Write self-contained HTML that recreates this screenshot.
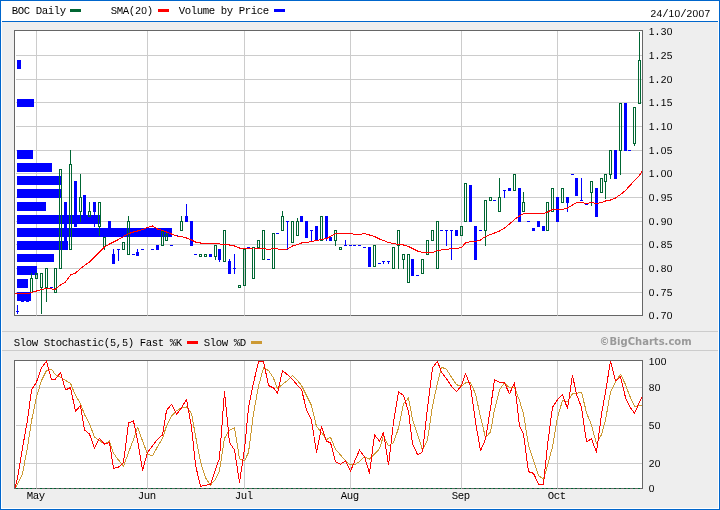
<!DOCTYPE html><html><head><meta charset="utf-8"><title>BOC Daily</title><style>html,body{margin:0;padding:0;background:#fff}svg{display:block;will-change:transform}text{font-family:"Liberation Mono",monospace;font-size:10.7px;fill:#000}.n{font-family:"Liberation Sans",sans-serif;font-size:10.2px;text-rendering:geometricPrecision}.b{font-family:"DejaVu Sans","Liberation Sans",sans-serif;font-weight:bold;font-size:10px;fill:#999}</style></head><body>
<svg width="720" height="510" viewBox="0 0 720 510" shape-rendering="crispEdges">
<rect x="0" y="0" width="720" height="510" fill="#0066cc"/>
<rect x="1" y="1" width="718" height="508" fill="#fff"/>
<rect x="2" y="22" width="716" height="486" fill="#eeeeee"/>
<rect x="2" y="21" width="716" height="1" fill="#0066cc"/>
<rect x="2" y="331" width="716" height="1" fill="#cccccc"/>
<rect x="2" y="350" width="716" height="1" fill="#cccccc"/>
<rect x="14" y="30" width="629" height="286" fill="#666666"/>
<rect x="15" y="31" width="627" height="284" fill="#fff"/>
<rect x="16" y="55" width="626" height="1" fill="#cccccc"/>
<rect x="16" y="79" width="626" height="1" fill="#cccccc"/>
<rect x="16" y="102" width="626" height="1" fill="#cccccc"/>
<rect x="16" y="126" width="626" height="1" fill="#cccccc"/>
<rect x="16" y="150" width="626" height="1" fill="#cccccc"/>
<rect x="16" y="173" width="626" height="1" fill="#cccccc"/>
<rect x="16" y="197" width="626" height="1" fill="#cccccc"/>
<rect x="16" y="221" width="626" height="1" fill="#cccccc"/>
<rect x="16" y="244" width="626" height="1" fill="#cccccc"/>
<rect x="16" y="268" width="626" height="1" fill="#cccccc"/>
<rect x="16" y="292" width="626" height="1" fill="#cccccc"/>
<rect x="36" y="31" width="1" height="284" fill="#cccccc"/>
<rect x="147" y="31" width="1" height="284" fill="#cccccc"/>
<rect x="244" y="31" width="1" height="284" fill="#cccccc"/>
<rect x="350" y="31" width="1" height="284" fill="#cccccc"/>
<rect x="461" y="31" width="1" height="284" fill="#cccccc"/>
<rect x="557" y="31" width="1" height="284" fill="#cccccc"/>
<rect x="14" y="360" width="629" height="129" fill="#666666"/>
<rect x="15" y="361" width="627" height="127" fill="#fff"/>
<rect x="16" y="387" width="626" height="1" fill="#cccccc"/>
<rect x="16" y="425" width="626" height="1" fill="#cccccc"/>
<rect x="16" y="463" width="626" height="1" fill="#cccccc"/>
<rect x="36" y="361" width="1" height="127" fill="#cccccc"/>
<rect x="147" y="361" width="1" height="127" fill="#cccccc"/>
<rect x="244" y="361" width="1" height="127" fill="#cccccc"/>
<rect x="350" y="361" width="1" height="127" fill="#cccccc"/>
<rect x="461" y="361" width="1" height="127" fill="#cccccc"/>
<rect x="557" y="361" width="1" height="127" fill="#cccccc"/>
<text x="11.80 17.80 23.80 29.80 35.80 41.80 47.80 53.80 59.80" y="14" xml:space="preserve">BOC Daily</text>
<rect x="70" y="9" width="11" height="3" fill="#006633"/>
<text x="110.80 116.80 122.80 128.80 135.20 141.20 146.80" y="14" xml:space="preserve">SMA(<tspan class="n">20</tspan>)</text>
<rect x="158" y="9" width="11" height="3" fill="#ff0000"/>
<text x="178.80 184.80 190.80 196.80 202.80 208.80 214.80 220.80 226.80 232.80 238.80 244.80 250.80 256.80 262.80" y="14" xml:space="preserve">Volume by Price</text>
<rect x="274" y="9" width="11" height="3" fill="#0000ff"/>
<text x="650.60 656.60 662.20 668.60 674.60 680.20 686.60 692.60 698.60 704.60" y="17" xml:space="preserve"><tspan class="n">24</tspan>/<tspan class="n">10</tspan>/<tspan class="n">2007</tspan></text>
<text x="13.80 19.80 25.80 31.80 37.80 43.80 49.80 55.80 61.80 67.80 73.80 79.80 85.80 91.80 97.80 103.80 110.20 115.80 122.20 127.80" y="346" xml:space="preserve">Slow Stochastic(<tspan class="n">5</tspan>,<tspan class="n">5</tspan>)</text>
<text x="139.80 145.80 151.80 157.80 163.80 169.80 175.80" y="346" xml:space="preserve">Fast %K</text>
<rect x="187" y="341" width="11" height="3" fill="#ff0000"/>
<text x="203.80 209.80 215.80 221.80 227.80 233.80 239.80" y="346" xml:space="preserve">Slow %D</text>
<rect x="251" y="341" width="11" height="3" fill="#cc9933"/>
<text x="599.5" y="345" class="b">©BigCharts.com</text>
<text x="648.70 654.30 660.70 666.70" y="35" xml:space="preserve"><tspan class="n">1</tspan>.<tspan class="n">30</tspan></text>
<text x="648.70 654.30 660.70 666.70" y="59" xml:space="preserve"><tspan class="n">1</tspan>.<tspan class="n">25</tspan></text>
<text x="648.70 654.30 660.70 666.70" y="83" xml:space="preserve"><tspan class="n">1</tspan>.<tspan class="n">20</tspan></text>
<text x="648.70 654.30 660.70 666.70" y="106" xml:space="preserve"><tspan class="n">1</tspan>.<tspan class="n">15</tspan></text>
<text x="648.70 654.30 660.70 666.70" y="130" xml:space="preserve"><tspan class="n">1</tspan>.<tspan class="n">10</tspan></text>
<text x="648.70 654.30 660.70 666.70" y="154" xml:space="preserve"><tspan class="n">1</tspan>.<tspan class="n">05</tspan></text>
<text x="648.70 654.30 660.70 666.70" y="177" xml:space="preserve"><tspan class="n">1</tspan>.<tspan class="n">00</tspan></text>
<text x="648.70 654.30 660.70 666.70" y="201" xml:space="preserve"><tspan class="n">0</tspan>.<tspan class="n">95</tspan></text>
<text x="648.70 654.30 660.70 666.70" y="225" xml:space="preserve"><tspan class="n">0</tspan>.<tspan class="n">90</tspan></text>
<text x="648.70 654.30 660.70 666.70" y="248" xml:space="preserve"><tspan class="n">0</tspan>.<tspan class="n">85</tspan></text>
<text x="648.70 654.30 660.70 666.70" y="272" xml:space="preserve"><tspan class="n">0</tspan>.<tspan class="n">80</tspan></text>
<text x="648.70 654.30 660.70 666.70" y="296" xml:space="preserve"><tspan class="n">0</tspan>.<tspan class="n">75</tspan></text>
<text x="648.70 654.30 660.70 666.70" y="319" xml:space="preserve"><tspan class="n">0</tspan>.<tspan class="n">70</tspan></text>
<text x="648.70 654.70 660.70" y="365" xml:space="preserve"><tspan class="n">100</tspan></text>
<text x="648.70 654.70" y="391" xml:space="preserve"><tspan class="n">80</tspan></text>
<text x="648.70 654.70" y="429" xml:space="preserve"><tspan class="n">50</tspan></text>
<text x="648.70 654.70" y="467" xml:space="preserve"><tspan class="n">20</tspan></text>
<text x="648.70" y="492" xml:space="preserve"><tspan class="n">0</tspan></text>
<text x="26.80 32.80 38.80" y="499" xml:space="preserve">May</text>
<text x="137.80 143.80 149.80" y="499" xml:space="preserve">Jun</text>
<text x="234.80 240.80 246.80" y="499" xml:space="preserve">Jul</text>
<text x="340.80 346.80 352.80" y="499" xml:space="preserve">Aug</text>
<text x="451.80 457.80 463.80" y="499" xml:space="preserve">Sep</text>
<text x="547.80 553.80 559.80" y="499" xml:space="preserve">Oct</text>
<rect x="17" y="60" width="4" height="9" fill="#0000ff"/>
<rect x="17" y="99" width="17" height="8" fill="#0000ff"/>
<rect x="17" y="150" width="16" height="9" fill="#0000ff"/>
<rect x="17" y="163" width="35" height="9" fill="#0000ff"/>
<rect x="17" y="176" width="44" height="9" fill="#0000ff"/>
<rect x="17" y="189" width="45" height="9" fill="#0000ff"/>
<rect x="17" y="202" width="29" height="9" fill="#0000ff"/>
<rect x="17" y="215" width="84" height="9" fill="#0000ff"/>
<rect x="17" y="228" width="155" height="9" fill="#0000ff"/>
<rect x="17" y="241" width="51" height="9" fill="#0000ff"/>
<rect x="17" y="254" width="37" height="8" fill="#0000ff"/>
<rect x="17" y="266" width="20" height="9" fill="#0000ff"/>
<rect x="17" y="279" width="11" height="9" fill="#0000ff"/>
<rect x="17" y="292" width="14" height="9" fill="#0000ff"/>
<rect x="17" y="305" width="1" height="6" fill="#0000ff"/>
<rect x="17" y="312" width="1" height="2" fill="#0000ff"/>
<rect x="16" y="311" width="3" height="1" fill="#0000ff"/>
<rect x="21" y="292" width="3" height="10" fill="#0000ff"/>
<rect x="26" y="292" width="3" height="10" fill="#0000ff"/>
<rect x="31" y="273" width="1" height="5" fill="#006633"/>
<rect x="30" y="278" width="1" height="15" fill="#006633"/>
<rect x="32" y="278" width="1" height="15" fill="#006633"/>
<rect x="31" y="278" width="1" height="1" fill="#006633"/>
<rect x="31" y="292" width="1" height="1" fill="#006633"/>
<rect x="35" y="273" width="1" height="6" fill="#006633"/>
<rect x="37" y="273" width="1" height="6" fill="#006633"/>
<rect x="36" y="273" width="1" height="1" fill="#006633"/>
<rect x="36" y="278" width="1" height="1" fill="#006633"/>
<rect x="41" y="288" width="1" height="26" fill="#006633"/>
<rect x="40" y="273" width="1" height="15" fill="#006633"/>
<rect x="42" y="273" width="1" height="15" fill="#006633"/>
<rect x="41" y="273" width="1" height="1" fill="#006633"/>
<rect x="41" y="287" width="1" height="1" fill="#006633"/>
<rect x="46" y="288" width="1" height="14" fill="#006633"/>
<rect x="45" y="268" width="1" height="20" fill="#006633"/>
<rect x="47" y="268" width="1" height="20" fill="#006633"/>
<rect x="46" y="268" width="1" height="1" fill="#006633"/>
<rect x="46" y="287" width="1" height="1" fill="#006633"/>
<rect x="50" y="287" width="3" height="1" fill="#0000ff"/>
<rect x="54" y="268" width="1" height="25" fill="#006633"/>
<rect x="56" y="268" width="1" height="25" fill="#006633"/>
<rect x="55" y="268" width="1" height="1" fill="#006633"/>
<rect x="55" y="292" width="1" height="1" fill="#006633"/>
<rect x="59" y="169" width="1" height="100" fill="#006633"/>
<rect x="61" y="169" width="1" height="100" fill="#006633"/>
<rect x="60" y="169" width="1" height="1" fill="#006633"/>
<rect x="60" y="268" width="1" height="1" fill="#006633"/>
<rect x="64" y="202" width="3" height="39" fill="#0000ff"/>
<rect x="70" y="150" width="1" height="14" fill="#006633"/>
<rect x="69" y="164" width="1" height="86" fill="#006633"/>
<rect x="71" y="164" width="1" height="86" fill="#006633"/>
<rect x="70" y="164" width="1" height="1" fill="#006633"/>
<rect x="70" y="249" width="1" height="1" fill="#006633"/>
<rect x="74" y="181" width="3" height="46" fill="#0000ff"/>
<rect x="80" y="174" width="1" height="23" fill="#006633"/>
<rect x="80" y="212" width="1" height="10" fill="#006633"/>
<rect x="79" y="197" width="1" height="15" fill="#006633"/>
<rect x="81" y="197" width="1" height="15" fill="#006633"/>
<rect x="80" y="197" width="1" height="1" fill="#006633"/>
<rect x="80" y="211" width="1" height="1" fill="#006633"/>
<rect x="83" y="195" width="3" height="27" fill="#0000ff"/>
<rect x="89" y="202" width="1" height="9" fill="#006633"/>
<rect x="88" y="211" width="1" height="6" fill="#006633"/>
<rect x="90" y="211" width="1" height="6" fill="#006633"/>
<rect x="89" y="211" width="1" height="1" fill="#006633"/>
<rect x="89" y="216" width="1" height="1" fill="#006633"/>
<rect x="94" y="212" width="1" height="15" fill="#0000ff"/>
<rect x="93" y="202" width="3" height="10" fill="#0000ff"/>
<rect x="99" y="227" width="1" height="9" fill="#006633"/>
<rect x="98" y="202" width="1" height="25" fill="#006633"/>
<rect x="100" y="202" width="1" height="25" fill="#006633"/>
<rect x="99" y="202" width="1" height="1" fill="#006633"/>
<rect x="99" y="226" width="1" height="1" fill="#006633"/>
<rect x="104" y="247" width="1" height="3" fill="#006633"/>
<rect x="103" y="237" width="1" height="10" fill="#006633"/>
<rect x="105" y="237" width="1" height="10" fill="#006633"/>
<rect x="104" y="237" width="1" height="1" fill="#006633"/>
<rect x="104" y="246" width="1" height="1" fill="#006633"/>
<rect x="108" y="221" width="3" height="10" fill="#0000ff"/>
<rect x="113" y="249" width="1" height="5" fill="#0000ff"/>
<rect x="112" y="254" width="3" height="10" fill="#0000ff"/>
<rect x="118" y="250" width="1" height="11" fill="#0000ff"/>
<rect x="117" y="249" width="3" height="1" fill="#0000ff"/>
<rect x="122" y="242" width="1" height="8" fill="#006633"/>
<rect x="124" y="242" width="1" height="8" fill="#006633"/>
<rect x="123" y="242" width="1" height="1" fill="#006633"/>
<rect x="123" y="249" width="1" height="1" fill="#006633"/>
<rect x="128" y="216" width="1" height="5" fill="#006633"/>
<rect x="127" y="221" width="1" height="34" fill="#006633"/>
<rect x="129" y="221" width="1" height="34" fill="#006633"/>
<rect x="128" y="221" width="1" height="1" fill="#006633"/>
<rect x="128" y="254" width="1" height="1" fill="#006633"/>
<rect x="132" y="254" width="3" height="1" fill="#0000ff"/>
<rect x="137" y="249" width="1" height="3" fill="#0000ff"/>
<rect x="136" y="252" width="3" height="4" fill="#0000ff"/>
<rect x="141" y="249" width="3" height="1" fill="#0000ff"/>
<rect x="151" y="249" width="3" height="1" fill="#0000ff"/>
<rect x="156" y="245" width="3" height="5" fill="#0000ff"/>
<rect x="161" y="231" width="1" height="15" fill="#006633"/>
<rect x="163" y="231" width="1" height="15" fill="#006633"/>
<rect x="162" y="231" width="1" height="1" fill="#006633"/>
<rect x="162" y="245" width="1" height="1" fill="#006633"/>
<rect x="166" y="231" width="1" height="3" fill="#006633"/>
<rect x="165" y="234" width="1" height="7" fill="#006633"/>
<rect x="167" y="234" width="1" height="7" fill="#006633"/>
<rect x="166" y="234" width="1" height="1" fill="#006633"/>
<rect x="166" y="240" width="1" height="1" fill="#006633"/>
<rect x="170" y="245" width="3" height="1" fill="#0000ff"/>
<rect x="175" y="235" width="3" height="1" fill="#0000ff"/>
<rect x="181" y="216" width="1" height="5" fill="#006633"/>
<rect x="180" y="221" width="1" height="10" fill="#006633"/>
<rect x="182" y="221" width="1" height="10" fill="#006633"/>
<rect x="181" y="221" width="1" height="1" fill="#006633"/>
<rect x="181" y="230" width="1" height="1" fill="#006633"/>
<rect x="186" y="204" width="1" height="12" fill="#0000ff"/>
<rect x="185" y="216" width="3" height="6" fill="#0000ff"/>
<rect x="190" y="221" width="3" height="25" fill="#0000ff"/>
<rect x="194" y="254" width="3" height="1" fill="#0000ff"/>
<rect x="199" y="254" width="1" height="3" fill="#006633"/>
<rect x="201" y="254" width="1" height="3" fill="#006633"/>
<rect x="200" y="254" width="1" height="1" fill="#006633"/>
<rect x="200" y="256" width="1" height="1" fill="#006633"/>
<rect x="204" y="254" width="1" height="3" fill="#006633"/>
<rect x="206" y="254" width="1" height="3" fill="#006633"/>
<rect x="205" y="254" width="1" height="1" fill="#006633"/>
<rect x="205" y="256" width="1" height="1" fill="#006633"/>
<rect x="209" y="254" width="3" height="3" fill="#0000ff"/>
<rect x="215" y="257" width="1" height="3" fill="#006633"/>
<rect x="214" y="245" width="1" height="12" fill="#006633"/>
<rect x="216" y="245" width="1" height="12" fill="#006633"/>
<rect x="215" y="245" width="1" height="1" fill="#006633"/>
<rect x="215" y="256" width="1" height="1" fill="#006633"/>
<rect x="219" y="260" width="1" height="2" fill="#0000ff"/>
<rect x="218" y="249" width="3" height="11" fill="#0000ff"/>
<rect x="223" y="230" width="1" height="32" fill="#006633"/>
<rect x="225" y="230" width="1" height="32" fill="#006633"/>
<rect x="224" y="230" width="1" height="1" fill="#006633"/>
<rect x="224" y="261" width="1" height="1" fill="#006633"/>
<rect x="229" y="259" width="1" height="2" fill="#0000ff"/>
<rect x="228" y="261" width="3" height="13" fill="#0000ff"/>
<rect x="234" y="254" width="1" height="14" fill="#0000ff"/>
<rect x="234" y="269" width="1" height="5" fill="#0000ff"/>
<rect x="233" y="268" width="3" height="1" fill="#0000ff"/>
<rect x="238" y="285" width="1" height="3" fill="#006633"/>
<rect x="240" y="285" width="1" height="3" fill="#006633"/>
<rect x="239" y="285" width="1" height="1" fill="#006633"/>
<rect x="239" y="287" width="1" height="1" fill="#006633"/>
<rect x="243" y="249" width="1" height="37" fill="#006633"/>
<rect x="245" y="249" width="1" height="37" fill="#006633"/>
<rect x="244" y="249" width="1" height="1" fill="#006633"/>
<rect x="244" y="285" width="1" height="1" fill="#006633"/>
<rect x="247" y="247" width="3" height="1" fill="#0000ff"/>
<rect x="252" y="247" width="1" height="32" fill="#006633"/>
<rect x="254" y="247" width="1" height="32" fill="#006633"/>
<rect x="253" y="247" width="1" height="1" fill="#006633"/>
<rect x="253" y="278" width="1" height="1" fill="#006633"/>
<rect x="257" y="240" width="1" height="8" fill="#006633"/>
<rect x="259" y="240" width="1" height="8" fill="#006633"/>
<rect x="258" y="240" width="1" height="1" fill="#006633"/>
<rect x="258" y="247" width="1" height="1" fill="#006633"/>
<rect x="262" y="230" width="1" height="30" fill="#006633"/>
<rect x="264" y="230" width="1" height="30" fill="#006633"/>
<rect x="263" y="230" width="1" height="1" fill="#006633"/>
<rect x="263" y="259" width="1" height="1" fill="#006633"/>
<rect x="267" y="259" width="3" height="1" fill="#0000ff"/>
<rect x="272" y="233" width="1" height="36" fill="#006633"/>
<rect x="274" y="233" width="1" height="36" fill="#006633"/>
<rect x="273" y="233" width="1" height="1" fill="#006633"/>
<rect x="273" y="268" width="1" height="1" fill="#006633"/>
<rect x="276" y="233" width="3" height="1" fill="#0000ff"/>
<rect x="282" y="211" width="1" height="5" fill="#006633"/>
<rect x="281" y="216" width="1" height="15" fill="#006633"/>
<rect x="283" y="216" width="1" height="15" fill="#006633"/>
<rect x="282" y="216" width="1" height="1" fill="#006633"/>
<rect x="282" y="230" width="1" height="1" fill="#006633"/>
<rect x="287" y="222" width="1" height="28" fill="#0000ff"/>
<rect x="286" y="221" width="3" height="1" fill="#0000ff"/>
<rect x="291" y="221" width="1" height="22" fill="#006633"/>
<rect x="293" y="221" width="1" height="22" fill="#006633"/>
<rect x="292" y="221" width="1" height="1" fill="#006633"/>
<rect x="292" y="242" width="1" height="1" fill="#006633"/>
<rect x="297" y="218" width="1" height="3" fill="#006633"/>
<rect x="296" y="221" width="1" height="15" fill="#006633"/>
<rect x="298" y="221" width="1" height="15" fill="#006633"/>
<rect x="297" y="221" width="1" height="1" fill="#006633"/>
<rect x="297" y="235" width="1" height="1" fill="#006633"/>
<rect x="300" y="216" width="3" height="6" fill="#0000ff"/>
<rect x="305" y="221" width="3" height="17" fill="#0000ff"/>
<rect x="311" y="231" width="1" height="10" fill="#0000ff"/>
<rect x="310" y="230" width="3" height="1" fill="#0000ff"/>
<rect x="315" y="226" width="3" height="15" fill="#0000ff"/>
<rect x="320" y="216" width="1" height="25" fill="#006633"/>
<rect x="322" y="216" width="1" height="25" fill="#006633"/>
<rect x="321" y="216" width="1" height="1" fill="#006633"/>
<rect x="321" y="240" width="1" height="1" fill="#006633"/>
<rect x="326" y="239" width="1" height="2" fill="#0000ff"/>
<rect x="325" y="216" width="3" height="23" fill="#0000ff"/>
<rect x="329" y="237" width="3" height="4" fill="#0000ff"/>
<rect x="335" y="241" width="1" height="5" fill="#006633"/>
<rect x="334" y="230" width="1" height="11" fill="#006633"/>
<rect x="336" y="230" width="1" height="11" fill="#006633"/>
<rect x="335" y="230" width="1" height="1" fill="#006633"/>
<rect x="335" y="240" width="1" height="1" fill="#006633"/>
<rect x="339" y="247" width="1" height="3" fill="#006633"/>
<rect x="341" y="247" width="1" height="3" fill="#006633"/>
<rect x="340" y="247" width="1" height="1" fill="#006633"/>
<rect x="340" y="249" width="1" height="1" fill="#006633"/>
<rect x="345" y="240" width="1" height="5" fill="#0000ff"/>
<rect x="344" y="245" width="3" height="1" fill="#0000ff"/>
<rect x="349" y="245" width="3" height="1" fill="#0000ff"/>
<rect x="353" y="245" width="3" height="1" fill="#0000ff"/>
<rect x="358" y="245" width="3" height="1" fill="#0000ff"/>
<rect x="363" y="247" width="3" height="1" fill="#0000ff"/>
<rect x="368" y="247" width="3" height="20" fill="#0000ff"/>
<rect x="373" y="245" width="1" height="22" fill="#006633"/>
<rect x="375" y="245" width="1" height="22" fill="#006633"/>
<rect x="374" y="245" width="1" height="1" fill="#006633"/>
<rect x="374" y="266" width="1" height="1" fill="#006633"/>
<rect x="378" y="263" width="3" height="1" fill="#0000ff"/>
<rect x="383" y="262" width="1" height="2" fill="#0000ff"/>
<rect x="382" y="261" width="3" height="1" fill="#0000ff"/>
<rect x="388" y="262" width="1" height="2" fill="#0000ff"/>
<rect x="387" y="261" width="3" height="1" fill="#0000ff"/>
<rect x="392" y="247" width="1" height="22" fill="#006633"/>
<rect x="394" y="247" width="1" height="22" fill="#006633"/>
<rect x="393" y="247" width="1" height="1" fill="#006633"/>
<rect x="393" y="268" width="1" height="1" fill="#006633"/>
<rect x="398" y="246" width="1" height="23" fill="#006633"/>
<rect x="397" y="230" width="1" height="16" fill="#006633"/>
<rect x="399" y="230" width="1" height="16" fill="#006633"/>
<rect x="398" y="230" width="1" height="1" fill="#006633"/>
<rect x="398" y="245" width="1" height="1" fill="#006633"/>
<rect x="403" y="260" width="1" height="9" fill="#006633"/>
<rect x="402" y="254" width="1" height="6" fill="#006633"/>
<rect x="404" y="254" width="1" height="6" fill="#006633"/>
<rect x="403" y="254" width="1" height="1" fill="#006633"/>
<rect x="403" y="259" width="1" height="1" fill="#006633"/>
<rect x="407" y="254" width="1" height="29" fill="#006633"/>
<rect x="409" y="254" width="1" height="29" fill="#006633"/>
<rect x="408" y="254" width="1" height="1" fill="#006633"/>
<rect x="408" y="282" width="1" height="1" fill="#006633"/>
<rect x="411" y="259" width="3" height="17" fill="#0000ff"/>
<rect x="416" y="275" width="3" height="1" fill="#0000ff"/>
<rect x="421" y="259" width="1" height="15" fill="#006633"/>
<rect x="423" y="259" width="1" height="15" fill="#006633"/>
<rect x="422" y="259" width="1" height="1" fill="#006633"/>
<rect x="422" y="273" width="1" height="1" fill="#006633"/>
<rect x="426" y="240" width="1" height="15" fill="#006633"/>
<rect x="428" y="240" width="1" height="15" fill="#006633"/>
<rect x="427" y="240" width="1" height="1" fill="#006633"/>
<rect x="427" y="254" width="1" height="1" fill="#006633"/>
<rect x="431" y="230" width="1" height="11" fill="#006633"/>
<rect x="433" y="230" width="1" height="11" fill="#006633"/>
<rect x="432" y="230" width="1" height="1" fill="#006633"/>
<rect x="432" y="240" width="1" height="1" fill="#006633"/>
<rect x="436" y="221" width="1" height="48" fill="#006633"/>
<rect x="438" y="221" width="1" height="48" fill="#006633"/>
<rect x="437" y="221" width="1" height="1" fill="#006633"/>
<rect x="437" y="268" width="1" height="1" fill="#006633"/>
<rect x="440" y="230" width="3" height="1" fill="#0000ff"/>
<rect x="446" y="231" width="1" height="15" fill="#0000ff"/>
<rect x="445" y="230" width="3" height="1" fill="#0000ff"/>
<rect x="451" y="231" width="1" height="29" fill="#0000ff"/>
<rect x="450" y="230" width="3" height="1" fill="#0000ff"/>
<rect x="455" y="230" width="3" height="6" fill="#0000ff"/>
<rect x="460" y="226" width="1" height="10" fill="#006633"/>
<rect x="462" y="226" width="1" height="10" fill="#006633"/>
<rect x="461" y="226" width="1" height="1" fill="#006633"/>
<rect x="461" y="235" width="1" height="1" fill="#006633"/>
<rect x="464" y="183" width="1" height="39" fill="#006633"/>
<rect x="466" y="183" width="1" height="39" fill="#006633"/>
<rect x="465" y="183" width="1" height="1" fill="#006633"/>
<rect x="465" y="221" width="1" height="1" fill="#006633"/>
<rect x="469" y="185" width="3" height="37" fill="#0000ff"/>
<rect x="474" y="226" width="3" height="34" fill="#0000ff"/>
<rect x="479" y="230" width="3" height="1" fill="#0000ff"/>
<rect x="485" y="231" width="1" height="15" fill="#006633"/>
<rect x="484" y="200" width="1" height="31" fill="#006633"/>
<rect x="486" y="200" width="1" height="31" fill="#006633"/>
<rect x="485" y="200" width="1" height="1" fill="#006633"/>
<rect x="485" y="230" width="1" height="1" fill="#006633"/>
<rect x="489" y="197" width="1" height="4" fill="#006633"/>
<rect x="491" y="197" width="1" height="4" fill="#006633"/>
<rect x="490" y="197" width="1" height="1" fill="#006633"/>
<rect x="490" y="200" width="1" height="1" fill="#006633"/>
<rect x="493" y="200" width="3" height="1" fill="#0000ff"/>
<rect x="499" y="178" width="1" height="19" fill="#006633"/>
<rect x="498" y="197" width="1" height="15" fill="#006633"/>
<rect x="500" y="197" width="1" height="15" fill="#006633"/>
<rect x="499" y="197" width="1" height="1" fill="#006633"/>
<rect x="499" y="211" width="1" height="1" fill="#006633"/>
<rect x="504" y="191" width="1" height="7" fill="#0000ff"/>
<rect x="503" y="190" width="3" height="1" fill="#0000ff"/>
<rect x="508" y="188" width="3" height="3" fill="#0000ff"/>
<rect x="513" y="174" width="1" height="17" fill="#006633"/>
<rect x="515" y="174" width="1" height="17" fill="#006633"/>
<rect x="514" y="174" width="1" height="1" fill="#006633"/>
<rect x="514" y="190" width="1" height="1" fill="#006633"/>
<rect x="518" y="188" width="3" height="34" fill="#0000ff"/>
<rect x="523" y="192" width="1" height="10" fill="#006633"/>
<rect x="522" y="202" width="1" height="10" fill="#006633"/>
<rect x="524" y="202" width="1" height="10" fill="#006633"/>
<rect x="523" y="202" width="1" height="1" fill="#006633"/>
<rect x="523" y="211" width="1" height="1" fill="#006633"/>
<rect x="527" y="221" width="3" height="1" fill="#0000ff"/>
<rect x="532" y="228" width="3" height="3" fill="#0000ff"/>
<rect x="537" y="221" width="3" height="6" fill="#0000ff"/>
<rect x="542" y="226" width="3" height="5" fill="#0000ff"/>
<rect x="546" y="202" width="1" height="29" fill="#006633"/>
<rect x="548" y="202" width="1" height="29" fill="#006633"/>
<rect x="547" y="202" width="1" height="1" fill="#006633"/>
<rect x="547" y="230" width="1" height="1" fill="#006633"/>
<rect x="551" y="188" width="1" height="24" fill="#006633"/>
<rect x="553" y="188" width="1" height="24" fill="#006633"/>
<rect x="552" y="188" width="1" height="1" fill="#006633"/>
<rect x="552" y="211" width="1" height="1" fill="#006633"/>
<rect x="556" y="197" width="3" height="25" fill="#0000ff"/>
<rect x="561" y="188" width="1" height="15" fill="#006633"/>
<rect x="563" y="188" width="1" height="15" fill="#006633"/>
<rect x="562" y="188" width="1" height="1" fill="#006633"/>
<rect x="562" y="202" width="1" height="1" fill="#006633"/>
<rect x="567" y="203" width="1" height="9" fill="#0000ff"/>
<rect x="566" y="197" width="3" height="6" fill="#0000ff"/>
<rect x="571" y="174" width="3" height="1" fill="#0000ff"/>
<rect x="575" y="178" width="3" height="18" fill="#0000ff"/>
<rect x="581" y="178" width="1" height="22" fill="#0000ff"/>
<rect x="580" y="200" width="3" height="1" fill="#0000ff"/>
<rect x="585" y="204" width="3" height="1" fill="#0000ff"/>
<rect x="591" y="193" width="1" height="13" fill="#006633"/>
<rect x="590" y="181" width="1" height="12" fill="#006633"/>
<rect x="592" y="181" width="1" height="12" fill="#006633"/>
<rect x="591" y="181" width="1" height="1" fill="#006633"/>
<rect x="591" y="192" width="1" height="1" fill="#006633"/>
<rect x="595" y="188" width="3" height="29" fill="#0000ff"/>
<rect x="600" y="178" width="1" height="15" fill="#006633"/>
<rect x="602" y="178" width="1" height="15" fill="#006633"/>
<rect x="601" y="178" width="1" height="1" fill="#006633"/>
<rect x="601" y="192" width="1" height="1" fill="#006633"/>
<rect x="605" y="182" width="1" height="17" fill="#006633"/>
<rect x="604" y="174" width="1" height="8" fill="#006633"/>
<rect x="606" y="174" width="1" height="8" fill="#006633"/>
<rect x="605" y="174" width="1" height="1" fill="#006633"/>
<rect x="605" y="181" width="1" height="1" fill="#006633"/>
<rect x="610" y="175" width="1" height="4" fill="#006633"/>
<rect x="609" y="150" width="1" height="25" fill="#006633"/>
<rect x="611" y="150" width="1" height="25" fill="#006633"/>
<rect x="610" y="150" width="1" height="1" fill="#006633"/>
<rect x="610" y="174" width="1" height="1" fill="#006633"/>
<rect x="614" y="150" width="3" height="29" fill="#0000ff"/>
<rect x="620" y="151" width="1" height="24" fill="#006633"/>
<rect x="619" y="103" width="1" height="48" fill="#006633"/>
<rect x="621" y="103" width="1" height="48" fill="#006633"/>
<rect x="620" y="103" width="1" height="1" fill="#006633"/>
<rect x="620" y="150" width="1" height="1" fill="#006633"/>
<rect x="624" y="103" width="3" height="48" fill="#0000ff"/>
<rect x="628" y="150" width="3" height="1" fill="#0000ff"/>
<rect x="634" y="144" width="1" height="2" fill="#006633"/>
<rect x="633" y="107" width="1" height="37" fill="#006633"/>
<rect x="635" y="107" width="1" height="37" fill="#006633"/>
<rect x="634" y="107" width="1" height="1" fill="#006633"/>
<rect x="634" y="143" width="1" height="1" fill="#006633"/>
<rect x="639" y="32" width="1" height="28" fill="#006633"/>
<rect x="638" y="60" width="1" height="44" fill="#006633"/>
<rect x="640" y="60" width="1" height="44" fill="#006633"/>
<rect x="639" y="60" width="1" height="1" fill="#006633"/>
<rect x="639" y="103" width="1" height="1" fill="#006633"/>
<polyline fill="none" stroke="#ff0000" stroke-width="1" stroke-linejoin="round" shape-rendering="crispEdges" points="15.0,293.3 29.5,293.3 31.5,292.5 36.5,291.0 41.5,289.5 46.5,288.5 51.5,289.0 55.5,289.0 60.5,285.0 65.5,282.0 70.5,275.0 75.5,273.0 80.5,268.5 84.5,265.5 89.5,262.0 94.5,257.0 99.5,252.0 104.5,247.0 109.5,244.0 113.5,242.0 118.5,239.5 123.5,236.5 128.5,233.7 133.5,232.0 137.5,231.0 142.5,229.5 147.5,227.5 152.5,226.0 157.5,229.0 162.5,230.5 166.5,232.0 171.5,234.0 176.5,236.0 181.5,236.5 186.5,238.0 191.5,240.0 195.5,242.0 200.5,243.0 205.5,244.0 210.5,243.5 215.5,243.5 219.5,244.0 224.5,244.0 229.5,245.0 234.5,246.0 239.5,248.0 244.5,249.0 248.5,248.5 253.5,248.0 258.5,248.3 263.5,248.5 268.5,249.5 273.5,248.5 277.5,249.0 282.5,249.5 287.5,249.0 292.5,246.0 297.5,244.5 301.5,243.0 306.5,242.5 311.5,241.5 316.5,240.5 321.5,239.5 326.5,238.5 330.5,236.5 335.5,233.5 340.5,233.5 345.5,233.5 350.5,233.5 354.5,234.3 359.5,234.5 364.5,233.5 369.5,235.0 374.5,236.5 379.5,239.0 383.5,240.5 388.5,242.5 393.5,243.5 398.5,244.5 403.5,245.0 408.5,246.5 412.5,248.5 417.5,251.0 422.5,252.5 427.5,252.5 432.5,252.5 437.5,250.5 441.5,250.0 446.5,249.5 451.5,248.5 456.5,248.5 461.5,247.5 465.5,243.0 470.5,241.5 475.5,241.5 480.5,240.0 485.5,236.5 490.5,234.5 494.5,233.0 499.5,231.0 504.5,228.0 509.5,224.0 514.5,219.5 519.5,216.0 523.5,213.5 528.5,213.5 533.5,213.5 538.5,213.5 543.5,213.5 547.5,212.0 552.5,209.5 557.5,209.5 562.5,209.5 567.5,208.0 572.5,205.0 576.5,202.5 581.5,202.5 586.5,203.5 591.5,202.5 596.5,203.5 601.5,202.5 605.5,201.0 610.5,200.0 615.5,198.0 620.5,194.5 625.5,190.5 629.5,186.0 634.5,180.5 639.5,175.5 642.0,171.0"/>
<rect x="16" y="488" width="2" height="1" fill="#006633"/>
<rect x="21" y="488" width="2" height="1" fill="#006633"/>
<rect x="26" y="488" width="2" height="1" fill="#006633"/>
<rect x="30" y="488" width="2" height="1" fill="#006633"/>
<rect x="35" y="488" width="2" height="1" fill="#006633"/>
<rect x="40" y="488" width="2" height="1" fill="#006633"/>
<rect x="45" y="488" width="2" height="1" fill="#006633"/>
<rect x="50" y="488" width="2" height="1" fill="#006633"/>
<rect x="54" y="488" width="2" height="1" fill="#006633"/>
<rect x="59" y="488" width="2" height="1" fill="#006633"/>
<rect x="64" y="488" width="2" height="1" fill="#006633"/>
<rect x="69" y="488" width="2" height="1" fill="#006633"/>
<rect x="74" y="488" width="2" height="1" fill="#006633"/>
<rect x="79" y="488" width="2" height="1" fill="#006633"/>
<rect x="83" y="488" width="2" height="1" fill="#006633"/>
<rect x="88" y="488" width="2" height="1" fill="#006633"/>
<rect x="93" y="488" width="2" height="1" fill="#006633"/>
<rect x="98" y="488" width="2" height="1" fill="#006633"/>
<rect x="103" y="488" width="2" height="1" fill="#006633"/>
<rect x="108" y="488" width="2" height="1" fill="#006633"/>
<rect x="112" y="488" width="2" height="1" fill="#006633"/>
<rect x="117" y="488" width="2" height="1" fill="#006633"/>
<rect x="122" y="488" width="2" height="1" fill="#006633"/>
<rect x="127" y="488" width="2" height="1" fill="#006633"/>
<rect x="132" y="488" width="2" height="1" fill="#006633"/>
<rect x="136" y="488" width="2" height="1" fill="#006633"/>
<rect x="141" y="488" width="2" height="1" fill="#006633"/>
<rect x="146" y="488" width="2" height="1" fill="#006633"/>
<rect x="151" y="488" width="2" height="1" fill="#006633"/>
<rect x="156" y="488" width="2" height="1" fill="#006633"/>
<rect x="161" y="488" width="2" height="1" fill="#006633"/>
<rect x="165" y="488" width="2" height="1" fill="#006633"/>
<rect x="170" y="488" width="2" height="1" fill="#006633"/>
<rect x="175" y="488" width="2" height="1" fill="#006633"/>
<rect x="180" y="488" width="2" height="1" fill="#006633"/>
<rect x="185" y="488" width="2" height="1" fill="#006633"/>
<rect x="190" y="488" width="2" height="1" fill="#006633"/>
<rect x="194" y="488" width="2" height="1" fill="#006633"/>
<rect x="199" y="488" width="2" height="1" fill="#006633"/>
<rect x="204" y="488" width="2" height="1" fill="#006633"/>
<rect x="209" y="488" width="2" height="1" fill="#006633"/>
<rect x="214" y="488" width="2" height="1" fill="#006633"/>
<rect x="218" y="488" width="2" height="1" fill="#006633"/>
<rect x="223" y="488" width="2" height="1" fill="#006633"/>
<rect x="228" y="488" width="2" height="1" fill="#006633"/>
<rect x="233" y="488" width="2" height="1" fill="#006633"/>
<rect x="238" y="488" width="2" height="1" fill="#006633"/>
<rect x="243" y="488" width="2" height="1" fill="#006633"/>
<rect x="247" y="488" width="2" height="1" fill="#006633"/>
<rect x="252" y="488" width="2" height="1" fill="#006633"/>
<rect x="257" y="488" width="2" height="1" fill="#006633"/>
<rect x="262" y="488" width="2" height="1" fill="#006633"/>
<rect x="267" y="488" width="2" height="1" fill="#006633"/>
<rect x="272" y="488" width="2" height="1" fill="#006633"/>
<rect x="276" y="488" width="2" height="1" fill="#006633"/>
<rect x="281" y="488" width="2" height="1" fill="#006633"/>
<rect x="286" y="488" width="2" height="1" fill="#006633"/>
<rect x="291" y="488" width="2" height="1" fill="#006633"/>
<rect x="296" y="488" width="2" height="1" fill="#006633"/>
<rect x="300" y="488" width="2" height="1" fill="#006633"/>
<rect x="305" y="488" width="2" height="1" fill="#006633"/>
<rect x="310" y="488" width="2" height="1" fill="#006633"/>
<rect x="315" y="488" width="2" height="1" fill="#006633"/>
<rect x="320" y="488" width="2" height="1" fill="#006633"/>
<rect x="325" y="488" width="2" height="1" fill="#006633"/>
<rect x="329" y="488" width="2" height="1" fill="#006633"/>
<rect x="334" y="488" width="2" height="1" fill="#006633"/>
<rect x="339" y="488" width="2" height="1" fill="#006633"/>
<rect x="344" y="488" width="2" height="1" fill="#006633"/>
<rect x="349" y="488" width="2" height="1" fill="#006633"/>
<rect x="353" y="488" width="2" height="1" fill="#006633"/>
<rect x="358" y="488" width="2" height="1" fill="#006633"/>
<rect x="363" y="488" width="2" height="1" fill="#006633"/>
<rect x="368" y="488" width="2" height="1" fill="#006633"/>
<rect x="373" y="488" width="2" height="1" fill="#006633"/>
<rect x="378" y="488" width="2" height="1" fill="#006633"/>
<rect x="382" y="488" width="2" height="1" fill="#006633"/>
<rect x="387" y="488" width="2" height="1" fill="#006633"/>
<rect x="392" y="488" width="2" height="1" fill="#006633"/>
<rect x="397" y="488" width="2" height="1" fill="#006633"/>
<rect x="402" y="488" width="2" height="1" fill="#006633"/>
<rect x="407" y="488" width="2" height="1" fill="#006633"/>
<rect x="411" y="488" width="2" height="1" fill="#006633"/>
<rect x="416" y="488" width="2" height="1" fill="#006633"/>
<rect x="421" y="488" width="2" height="1" fill="#006633"/>
<rect x="426" y="488" width="2" height="1" fill="#006633"/>
<rect x="431" y="488" width="2" height="1" fill="#006633"/>
<rect x="436" y="488" width="2" height="1" fill="#006633"/>
<rect x="440" y="488" width="2" height="1" fill="#006633"/>
<rect x="445" y="488" width="2" height="1" fill="#006633"/>
<rect x="450" y="488" width="2" height="1" fill="#006633"/>
<rect x="455" y="488" width="2" height="1" fill="#006633"/>
<rect x="460" y="488" width="2" height="1" fill="#006633"/>
<rect x="464" y="488" width="2" height="1" fill="#006633"/>
<rect x="469" y="488" width="2" height="1" fill="#006633"/>
<rect x="474" y="488" width="2" height="1" fill="#006633"/>
<rect x="479" y="488" width="2" height="1" fill="#006633"/>
<rect x="484" y="488" width="2" height="1" fill="#006633"/>
<rect x="489" y="488" width="2" height="1" fill="#006633"/>
<rect x="493" y="488" width="2" height="1" fill="#006633"/>
<rect x="498" y="488" width="2" height="1" fill="#006633"/>
<rect x="503" y="488" width="2" height="1" fill="#006633"/>
<rect x="508" y="488" width="2" height="1" fill="#006633"/>
<rect x="513" y="488" width="2" height="1" fill="#006633"/>
<rect x="518" y="488" width="2" height="1" fill="#006633"/>
<rect x="522" y="488" width="2" height="1" fill="#006633"/>
<rect x="527" y="488" width="2" height="1" fill="#006633"/>
<rect x="532" y="488" width="2" height="1" fill="#006633"/>
<rect x="537" y="488" width="2" height="1" fill="#006633"/>
<rect x="542" y="488" width="2" height="1" fill="#006633"/>
<rect x="546" y="488" width="2" height="1" fill="#006633"/>
<rect x="551" y="488" width="2" height="1" fill="#006633"/>
<rect x="556" y="488" width="2" height="1" fill="#006633"/>
<rect x="561" y="488" width="2" height="1" fill="#006633"/>
<rect x="566" y="488" width="2" height="1" fill="#006633"/>
<rect x="571" y="488" width="2" height="1" fill="#006633"/>
<rect x="575" y="488" width="2" height="1" fill="#006633"/>
<rect x="580" y="488" width="2" height="1" fill="#006633"/>
<rect x="585" y="488" width="2" height="1" fill="#006633"/>
<rect x="590" y="488" width="2" height="1" fill="#006633"/>
<rect x="595" y="488" width="2" height="1" fill="#006633"/>
<rect x="600" y="488" width="2" height="1" fill="#006633"/>
<rect x="604" y="488" width="2" height="1" fill="#006633"/>
<rect x="609" y="488" width="2" height="1" fill="#006633"/>
<rect x="614" y="488" width="2" height="1" fill="#006633"/>
<rect x="619" y="488" width="2" height="1" fill="#006633"/>
<rect x="624" y="488" width="2" height="1" fill="#006633"/>
<rect x="628" y="488" width="2" height="1" fill="#006633"/>
<rect x="633" y="488" width="2" height="1" fill="#006633"/>
<rect x="638" y="488" width="2" height="1" fill="#006633"/>
<rect x="36" y="488" width="1" height="1" fill="#aaaaaa"/>
<rect x="36" y="315" width="1" height="1" fill="#aaaaaa"/>
<rect x="147" y="488" width="1" height="1" fill="#aaaaaa"/>
<rect x="147" y="315" width="1" height="1" fill="#aaaaaa"/>
<rect x="244" y="488" width="1" height="1" fill="#aaaaaa"/>
<rect x="244" y="315" width="1" height="1" fill="#aaaaaa"/>
<rect x="350" y="488" width="1" height="1" fill="#aaaaaa"/>
<rect x="350" y="315" width="1" height="1" fill="#aaaaaa"/>
<rect x="461" y="488" width="1" height="1" fill="#aaaaaa"/>
<rect x="461" y="315" width="1" height="1" fill="#aaaaaa"/>
<rect x="557" y="488" width="1" height="1" fill="#aaaaaa"/>
<rect x="557" y="315" width="1" height="1" fill="#aaaaaa"/>
<polyline fill="none" stroke="#cc9933" stroke-width="1" stroke-linejoin="round" shape-rendering="crispEdges" points="15.0,488.0 17.5,484.0 22.5,474.0 27.5,447.0 31.5,421.0 36.5,397.0 41.5,380.5 46.5,370.5 51.5,369.3 55.5,374.7 60.5,377.2 65.5,380.5 70.5,383.3 75.5,395.5 80.5,403.5 84.5,414.5 89.5,423.5 94.5,437.3 99.5,440.3 104.5,444.2 109.5,441.0 113.5,453.3 118.5,460.0 123.5,466.3 128.5,452.5 133.5,439.5 137.5,427.2 142.5,440.8 147.5,454.2 152.5,455.8 157.5,446.7 162.5,438.3 166.5,426.0 171.5,416.0 176.5,410.7 181.5,408.0 186.5,407.0 191.5,413.5 195.5,435.8 200.5,461.7 205.5,477.8 210.5,485.0 215.5,479.2 219.5,470.8 224.5,438.3 229.5,430.2 234.5,427.6 239.5,458.7 244.5,460.8 248.5,452.5 253.5,413.5 258.5,386.3 263.5,368.0 268.5,370.5 273.5,378.0 277.5,388.8 282.5,384.3 287.5,380.5 292.5,375.2 297.5,380.5 301.5,385.5 306.5,395.5 311.5,405.5 316.5,426.5 321.5,432.3 326.5,439.5 330.5,437.3 335.5,449.2 340.5,455.0 345.5,460.8 350.5,465.0 354.5,464.7 359.5,461.7 364.5,456.7 369.5,459.2 374.5,454.2 379.5,448.7 383.5,435.7 388.5,445.8 393.5,442.5 398.5,428.2 403.5,403.8 408.5,398.0 412.5,419.4 417.5,434.4 422.5,450.0 427.5,440.0 432.5,406.0 437.5,383.0 441.5,367.2 446.5,369.3 451.5,377.2 456.5,384.7 461.5,386.3 465.5,383.0 470.5,382.7 475.5,393.8 480.5,417.0 485.5,437.7 490.5,432.0 494.5,409.8 499.5,389.7 504.5,383.0 509.5,387.7 514.5,387.7 519.5,400.5 523.5,414.0 528.5,445.0 533.5,460.8 538.5,475.8 543.5,478.8 547.5,465.8 552.5,446.7 557.5,417.3 562.5,400.5 567.5,401.7 572.5,393.6 576.5,393.4 581.5,392.1 586.5,412.7 591.5,425.0 596.5,444.0 601.5,434.5 605.5,420.0 610.5,392.0 615.5,381.7 620.5,374.2 625.5,384.5 629.5,395.5 634.5,406.4 639.5,405.8 642.0,405.5"/>
<polyline fill="none" stroke="#ff0000" stroke-width="1" stroke-linejoin="round" shape-rendering="crispEdges" points="15.0,488.0 17.5,478.0 22.5,448.0 27.5,420.0 31.5,390.0 36.5,382.0 41.5,368.0 46.5,361.0 51.5,380.0 55.5,379.0 60.5,372.5 65.5,390.0 70.5,387.5 75.5,411.3 80.5,405.5 84.5,430.0 89.5,434.0 94.5,448.3 99.5,438.3 104.5,444.2 109.5,442.5 113.5,468.3 118.5,467.2 123.5,462.5 128.5,423.0 133.5,421.0 137.5,440.0 142.5,470.3 147.5,452.5 152.5,445.8 157.5,439.2 162.5,435.0 166.5,410.5 171.5,404.3 176.5,414.3 181.5,408.0 186.5,399.3 191.5,426.7 195.5,465.0 200.5,486.2 205.5,485.5 210.5,484.2 215.5,469.2 219.5,458.3 224.5,391.3 229.5,442.5 234.5,450.0 239.5,482.5 244.5,449.2 248.5,408.0 253.5,383.0 258.5,361.7 263.5,361.3 268.5,385.5 273.5,388.0 277.5,393.0 282.5,370.5 287.5,374.7 292.5,379.3 297.5,385.5 301.5,389.3 306.5,409.7 311.5,420.3 316.5,452.5 321.5,427.0 326.5,441.5 330.5,442.5 335.5,461.7 340.5,464.2 345.5,460.8 350.5,471.3 354.5,461.5 359.5,450.0 364.5,456.7 369.5,473.3 374.5,435.0 379.5,441.0 383.5,432.5 388.5,465.0 393.5,422.3 398.5,391.8 403.5,395.5 408.5,411.3 412.5,444.0 417.5,454.5 422.5,452.5 427.5,408.0 432.5,367.7 437.5,361.3 441.5,372.2 446.5,378.8 451.5,386.3 456.5,391.8 461.5,385.5 465.5,373.3 470.5,386.3 475.5,421.7 480.5,450.8 485.5,439.2 490.5,408.2 494.5,380.0 499.5,382.2 504.5,383.0 509.5,393.8 514.5,383.0 519.5,425.7 523.5,434.0 528.5,471.7 533.5,473.3 538.5,484.2 543.5,484.2 547.5,445.0 552.5,407.3 557.5,399.7 562.5,394.3 567.5,408.8 572.5,375.2 576.5,394.3 581.5,407.5 586.5,441.7 591.5,439.0 596.5,452.3 601.5,414.3 605.5,392.0 610.5,361.2 615.5,381.0 620.5,377.0 625.5,397.5 629.5,406.4 634.5,413.3 639.5,402.0 642.0,397.0"/>
</svg></body></html>
